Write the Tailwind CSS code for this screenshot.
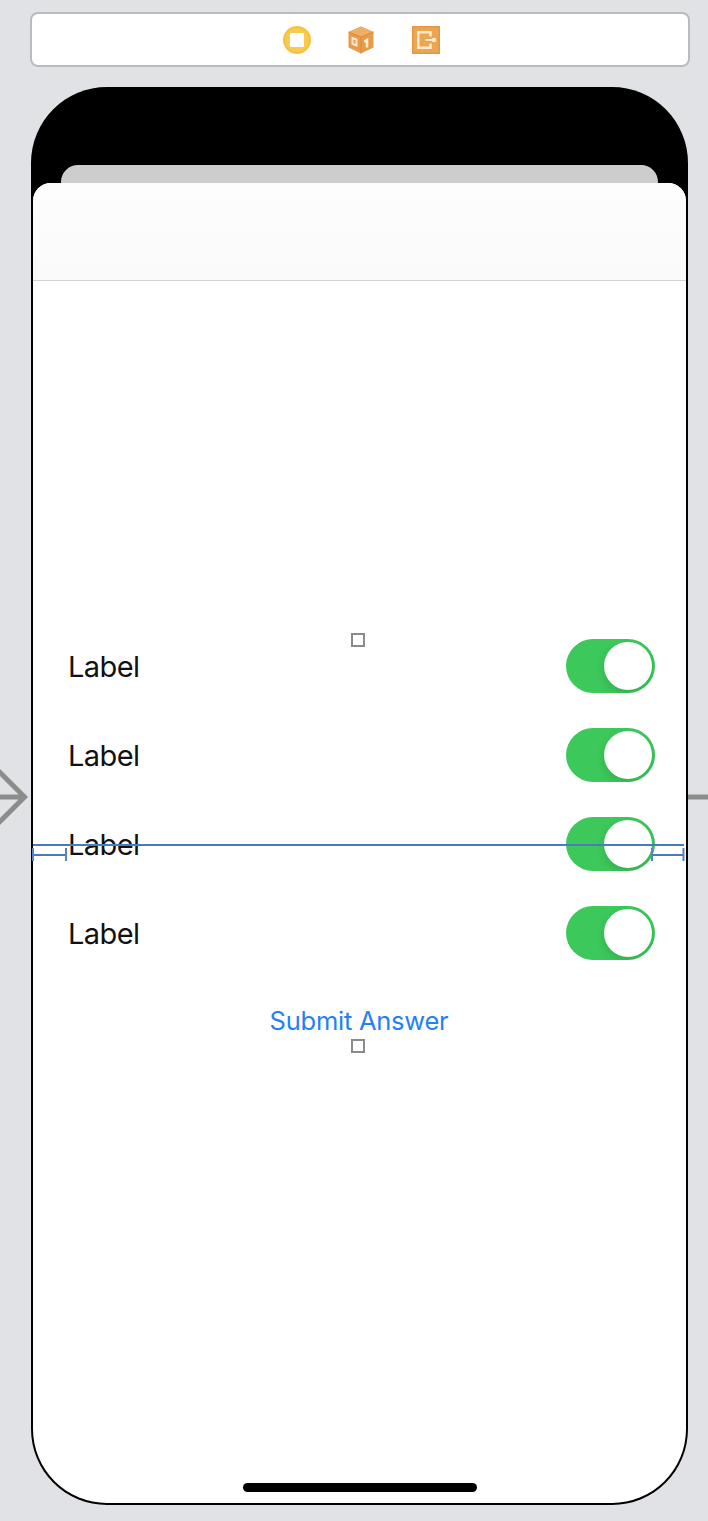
<!DOCTYPE html>
<html lang="en">
<head>
<meta charset="utf-8">
<title>Storyboard scene</title>
<script src="https://cdn.jsdelivr.net/npm/@tailwindcss/browser@4"></script>
</head>
<body class="bg-[#e1e2e6] font-['Inter',sans-serif]">
<div class="relative w-[708px] h-[1521px] overflow-hidden pt-3 pl-[30px]">
  <!-- Scene dock -->
  <header class="w-[660px] h-[55px] bg-white border-2 border-[#bbbbbd] rounded-lg flex items-center justify-center pl-[2px] pt-px">
    <svg class="w-7 h-7" viewBox="0 0 28 28"><circle cx="14" cy="14" r="14" fill="#f9cb4c"/><circle cx="14" cy="14" r="12.800" fill="none" stroke="#f4c040" stroke-width="1.500"/><rect x="7" y="7" width="14" height="14" rx="1" fill="#fff"/></svg>
    <svg class="w-7 h-7 ml-[36px]" viewBox="0 0 28 28"><path d="M14 .5 26.500 6v15.500L14 27.500 1.500 21.500V6Z" fill="#e79b4b"/><path d="M14 .5 26.500 6 14 11 1.500 6Z" fill="#efad66"/><path d="M1.500 6 14 11 26.500 6M14 11v16.500" fill="none" stroke="#d98b40" stroke-width="1"/><path d="m5.500 12 4 1.500v6l-4-1.700Z" fill="none" stroke="#fbe6cc" stroke-width="2"/><path d="m17.300 15.800 2.700-1.800v7.500" fill="none" stroke="#fdf0dc" stroke-width="2.500"/></svg>
    <svg class="w-7 h-7 ml-[37px]" viewBox="0 0 28 28"><rect width="28" height="28" fill="#eba654"/><rect x=".75" y=".75" width="26.500" height="26.500" fill="none" stroke="#e59844" stroke-width="1.500"/><path d="M18.500 10.500V6.300H6.300v15.400h12.200v-4.200" fill="none" stroke="#fdebd0" stroke-width="2.400"/><path d="M13.500 14h8" stroke="#fdebd0" stroke-width="2"/><circle cx="22" cy="14" r="2.300" fill="#fdebd0"/></svg>
  </header>

  <!-- Device -->
  <main class="ml-px mt-5 w-[657px] h-[1418px] rounded-[76px] bg-black p-[2px] pt-[78px] overflow-hidden">
    <div class="h-[18px] mx-7 rounded-t-[17px] bg-[#cdcdcd]"></div>
    <section class="h-[1320px] rounded-t-[18px] rounded-b-[74px] bg-white overflow-hidden flex flex-col">
      <div class="h-[98px] shrink-0 bg-gradient-to-b from-[#fdfdfd] to-[#fafafa] border-b border-[#d2d2d2]"></div>
      <div class="mt-[358px] pl-[35px] pr-[31px] flex flex-col gap-[35px]">
        <div class="h-[54px] flex items-center justify-between"><span class="text-[29px] leading-[54px] pt-[2px] tracking-[-0.6px] text-[#111]">Label</span><span class="w-[89px] h-[54px] rounded-full bg-[#3cc85a] p-[3px] flex justify-end overflow-hidden"><i class="size-12 rounded-full bg-white shadow-[0_4px_10px_rgba(0,0,0,0.13)]"></i></span></div>
        <div class="h-[54px] flex items-center justify-between"><span class="text-[29px] leading-[54px] pt-[2px] tracking-[-0.6px] text-[#111]">Label</span><span class="w-[89px] h-[54px] rounded-full bg-[#3cc85a] p-[3px] flex justify-end overflow-hidden"><i class="size-12 rounded-full bg-white shadow-[0_4px_10px_rgba(0,0,0,0.13)]"></i></span></div>
        <div class="h-[54px] flex items-center justify-between"><span class="text-[29px] leading-[54px] pt-[2px] tracking-[-0.6px] text-[#111]">Label</span><span class="w-[89px] h-[54px] rounded-full bg-[#3cc85a] p-[3px] flex justify-end overflow-hidden"><i class="size-12 rounded-full bg-white shadow-[0_4px_10px_rgba(0,0,0,0.13)]"></i></span></div>
        <div class="h-[54px] flex items-center justify-between"><span class="text-[29px] leading-[54px] pt-[2px] tracking-[-0.6px] text-[#111]">Label</span><span class="w-[89px] h-[54px] rounded-full bg-[#3cc85a] p-[3px] flex justify-end overflow-hidden"><i class="size-12 rounded-full bg-white shadow-[0_4px_10px_rgba(0,0,0,0.13)]"></i></span></div>
      </div>
      <div class="mt-[43px] pr-px text-center text-[25.500px] tracking-[-0.25px] leading-9 text-[#2680f5]">Submit Answer</div>
      <div class="mt-auto mb-[11px] mx-auto w-[234px] h-[9px] rounded-full bg-black"></div>
    </section>
  </main>

  <!-- Segue connectors, alignment guides and selection handles -->
  <svg class="absolute inset-0 pointer-events-none" width="708" height="1521" viewBox="0 0 708 1521" fill="none">
    <path d="M-2 797H24M-3 769.500 24.500 797-3 824.500M688 797h20" stroke="#8c8c8c" stroke-width="5"/>
    <path d="M33 845H684M33 855H66M652 855H683" stroke="#4a7bbd" stroke-width="2"/>
    <path d="M33 848v13M66 848v13M652 848v13M683.500 848v13" stroke="#5585c5" stroke-width="2"/>
    <path d="M352 634h12v12h-12ZM352 1040h12v12h-12Z" fill="#fff" stroke="#8b8b8b" stroke-width="2"/>
  </svg>
</div>
</body>
</html>
